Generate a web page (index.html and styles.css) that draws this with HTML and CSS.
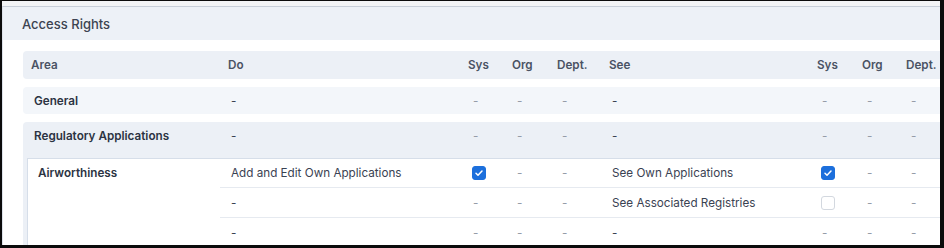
FILE: index.html
```html
<!DOCTYPE html>
<html lang="en">
<head>
<meta charset="utf-8">
<title>Access Rights</title>
<link rel="stylesheet" href="styles.css">
</head>
<body>
<div class="frame">
  <div class="page">
    <section class="card">
      <header class="card-head">Access Rights</header>
      <div class="card-body">
        <div class="table">
          <div class="row head">
            <div class="c">Area</div>
            <div class="c">Do</div>
            <div class="c">Sys</div>
            <div class="c">Org</div>
            <div class="c">Dept.</div>
            <div class="c">See</div>
            <div class="c">Sys</div>
            <div class="c">Org</div>
            <div class="c">Dept.</div>
          </div>

          <div class="group light">
            <div class="row body">
              <div class="c area">General</div>
              <div class="c txt">-</div>
              <div class="c n dash">-</div>
              <div class="c n dash">-</div>
              <div class="c n dash">-</div>
              <div class="c txt">-</div>
              <div class="c n dash">-</div>
              <div class="c n dash">-</div>
              <div class="c n dash">-</div>
            </div>
          </div>

          <div class="group dark">
            <div class="row body">
              <div class="c area">Regulatory Applications</div>
              <div class="c txt">-</div>
              <div class="c n dash">-</div>
              <div class="c n dash">-</div>
              <div class="c n dash">-</div>
              <div class="c txt">-</div>
              <div class="c n dash">-</div>
              <div class="c n dash">-</div>
              <div class="c n dash">-</div>
            </div>
            <div class="sub">
              <div class="sub-area">Airworthiness</div>
              <div class="sub-rows">
                <div class="srow">
                  <div class="c txt">Add and Edit Own Applications</div>
                  <div class="c n"><span class="cb on"><svg viewBox="0 0 14 14" width="14" height="14"><path d="M4 7.3l2 2 4-4.3" fill="none" stroke="#fff" stroke-width="1.5" stroke-linecap="round" stroke-linejoin="round"/></svg></span></div>
                  <div class="c n dash">-</div>
                  <div class="c n dash">-</div>
                  <div class="c txt">See Own Applications</div>
                  <div class="c n"><span class="cb on"><svg viewBox="0 0 14 14" width="14" height="14"><path d="M4 7.3l2 2 4-4.3" fill="none" stroke="#fff" stroke-width="1.5" stroke-linecap="round" stroke-linejoin="round"/></svg></span></div>
                  <div class="c n dash">-</div>
                  <div class="c n dash">-</div>
                </div>
                <div class="srow">
                  <div class="c txt">-</div>
                  <div class="c n dash">-</div>
                  <div class="c n dash">-</div>
                  <div class="c n dash">-</div>
                  <div class="c txt">See Associated Registries</div>
                  <div class="c n"><span class="cb"></span></div>
                  <div class="c n dash">-</div>
                  <div class="c n dash">-</div>
                </div>
                <div class="srow">
                  <div class="c txt">-</div>
                  <div class="c n dash">-</div>
                  <div class="c n dash">-</div>
                  <div class="c n dash">-</div>
                  <div class="c txt">-</div>
                  <div class="c n dash">-</div>
                  <div class="c n dash">-</div>
                  <div class="c n dash">-</div>
                </div>
              </div>
            </div>
          </div>
        </div>
      </div>
    </section>
  </div>
</div>
</body>
</html>
```

FILE: styles.css
```css
* { box-sizing: border-box; }

html, body {
  margin: 0;
  padding: 0;
  background: #0b0b0b;
}

body {
  font-family: Inter, "Noto Sans", "Liberation Sans", sans-serif;
  font-size: 11.7px;
  color: #3a4252;
}

.frame {
  margin: 1px 4px 3px 2px;
  height: 244px;
  width: 938px;
  overflow: hidden;
  background: #f3f4f6;
}

.page {
  padding-top: 5px;
  width: 1000px;
}

.card {
  background: #ffffff;
  border-top: 1px solid #c8cfd9;
  border-left: 1px solid #dde2ea;
}

.card-head {
  height: 33px;
  background: #edf1f7;
  padding-left: 19px;
  display: flex;
  align-items: center;
  font-size: 13px;
  font-weight: 500;
  color: #3c4351;
}

.card-body {
  padding: 11px 0 0 20px;
}

.table {
  display: flex;
  flex-direction: column;
  gap: 8px;
}

.row {
  display: grid;
  grid-template-columns: 197px 240px 44px 45px 52px 208px 45px 44px 80px;
  align-items: center;
}

.row.head {
  height: 28px;
  background: #ecf0f6;
  border-radius: 4px 0 0 4px;
  font-weight: 600;
  color: #4a5364;
}

.row.head .c { padding-left: 8px; }

.group {
  border-radius: 4px 0 0 4px;
}
.group.light { background: #f3f6fa; }
.group.dark { background: #ecf0f6; padding-bottom: 4px; }

.row.body { height: 28px; }
.group.light .row.body { height: 27px; }

.c { white-space: nowrap; }

.row.body .c { padding-left: 11px; }
.row.body .c.n { padding-left: 13px; }

.area {
  font-weight: 600;
  color: #2b3342;
}

.dash { color: #959ca8; }
.txt { color: #3a4252; }

.sub {
  margin: 8px 0 0 4px;
  background: #ffffff;
  border: 1px solid #d6dee9;
  border-right: none;
  display: flex;
}

.sub-area {
  width: 192px;
  flex: none;
  padding: 7px 0 0 10px;
  font-weight: 600;
  color: #2b3342;
}

.sub-rows {
  flex: 1;
}

.srow {
  display: grid;
  grid-template-columns: 240px 44px 45px 52px 208px 45px 44px 80px;
  align-items: center;
  height: 30px;
  border-bottom: 1px solid #e6eaf0;
}
.srow:first-child { height: 29px; }

.srow .c { padding-left: 11px; }
.srow .c.n { padding-left: 13px; }

.cb {
  display: block;
  width: 14px;
  height: 14px;
  border-radius: 3px;
  border: 1px solid #d3d8df;
  background: #fff;
  margin-left: -1px;
}
.cb.on {
  background: #1c6fdc;
  border-color: #1c6fdc;
  position: relative;
}
.cb.on svg {
  position: absolute;
  left: -1px;
  top: -1px;
}
```
